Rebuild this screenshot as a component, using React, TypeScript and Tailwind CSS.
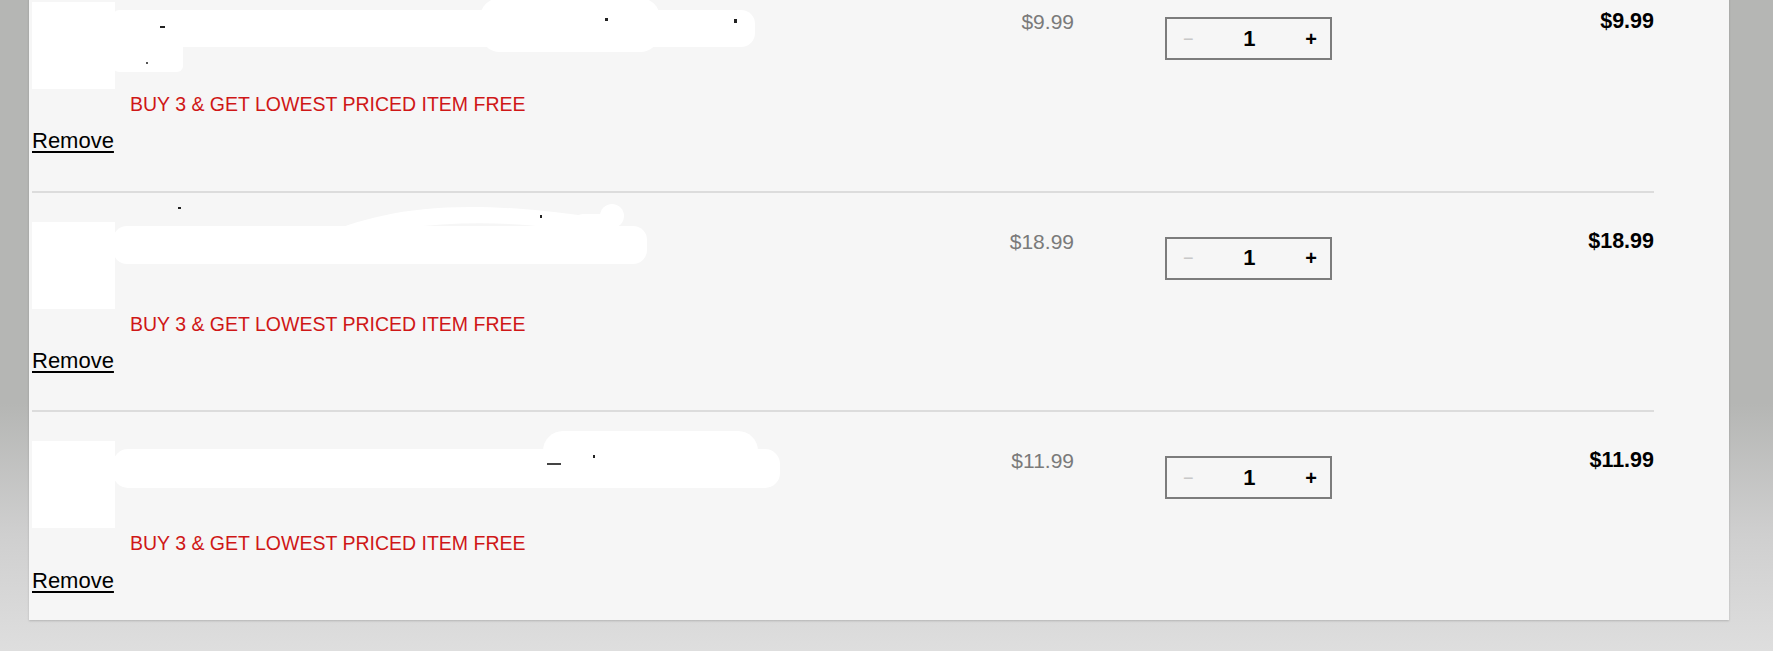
import React from "react";

interface CartItem {
  id: string;
  price: string;
  qty: number;
  blob: React.ReactNode;
}

const FONT = { fontFamily: '"Liberation Sans", Arial, sans-serif' };

// redacted product names (white scribbles over the original text)
const BLOBS: React.ReactNode[] = [
  <>
    <rect x="-2" y="8" width="642" height="37" rx="14" fill="#fff" />
    <rect x="-2" y="8" width="70" height="62" rx="6" fill="#fff" />
    <rect x="365" y="-4" width="180" height="54" rx="20" fill="#fff" />
    <rect x="45" y="24" width="5" height="2" fill="#222" />
    <rect x="490" y="16" width="3" height="3" fill="#222" />
    <rect x="619" y="17" width="3" height="4" fill="#222" />
    <rect x="31" y="60" width="2" height="2" fill="#555" />
  </>,
  <>
    <rect x="-2" y="4" width="534" height="38" rx="14" fill="#fff" />
    <path d="M205 14 C 260 -10, 330 -26, 470 -6 L 478 12 C 380 -6, 300 0, 215 20 Z" fill="#fff" />
    <circle cx="497" cy="-6" r="12" fill="#fff" />
    <rect x="460" y="-8" width="40" height="18" rx="8" fill="#fff" />
    <rect x="63" y="-15" width="3" height="2" fill="#222" />
    <rect x="425" y="-7" width="2" height="3" fill="#222" />
  </>,
  <>
    <rect x="-2" y="8" width="667" height="39" rx="15" fill="#fff" />
    <rect x="428" y="-10" width="215" height="45" rx="20" fill="#fff" />
    <rect x="462" y="28" width="113" height="19" rx="4" fill="#fff" />
    <rect x="478" y="14" width="2" height="3" fill="#222" />
    <rect x="432" y="22" width="14" height="2" fill="#444" />
  </>,
];

const ITEMS: CartItem[] = [
  { id: "a", price: "$9.99", qty: 1, blob: BLOBS[0] },
  { id: "b", price: "$18.99", qty: 1, blob: BLOBS[1] },
  { id: "c", price: "$11.99", qty: 1, blob: BLOBS[2] },
];

function QtyBox({ qty }: { qty: number }) {
  return (
    <div className="mt-[15px] ml-[91px] flex h-[43px] w-[167px] items-center justify-between border-2 border-[#7c7c7c] pl-[16px] pr-[13px]">
      <span className="text-[18px] leading-none text-[#c8c8c8]">−</span>
      <span className="text-[22px] font-bold leading-none text-black">{qty}</span>
      <span className="text-[20px] font-bold leading-none text-black">+</span>
    </div>
  );
}

function CartRow({ item, last }: { item: CartItem; last: boolean }) {
  return (
    <div className={last ? "pt-[29px] pb-[27px]" : "pt-[29px] pb-[37px] border-b-2 border-[#dcdcdc]"}>
      <div className="flex items-start">
        <div className="h-[87px] w-[83px] shrink-0 bg-white" />
        <div className="relative h-[87px] w-[839px] shrink-0">
          <svg className="absolute left-0 top-0 overflow-visible" width="700" height="80">
            {item.blob}
          </svg>
        </div>
        <div className="mt-[8px] w-[120px] shrink-0 text-right text-[21px] text-[#7a7a7a]">
          {item.price}
        </div>
        <QtyBox qty={item.qty} />
        <div className="mt-[7px] flex-1 text-right text-[21.5px] font-bold text-black">
          {item.price}
        </div>
      </div>
      <div className="mt-[4px] pl-[98px] text-[19.5px] text-[#cf1717]">
        BUY 3 &amp; GET LOWEST PRICED ITEM FREE
      </div>
      <div className="mt-[13px]">
        <a href="#" className="text-[22px] text-black underline decoration-[2px] underline-offset-[3px]">
          Remove
        </a>
      </div>
    </div>
  );
}

export default function App() {
  return (
    <div
      className="relative h-[651px] w-full overflow-hidden leading-[1.149] bg-[linear-gradient(to_bottom,#b5b6b4_0%,#b5b6b4_62%,#cfcfcf_82%,#dedede_100%)]"
      style={FONT}
    >
      <div className="ml-[29px] mt-[-27px] w-[1700px] bg-[#f6f6f6] pl-[3px] pr-[75px] shadow-[0_1px_2px_rgba(0,0,0,0.18)]">
        {ITEMS.map((item, i) => (
          <CartRow key={item.id} item={item} last={i === ITEMS.length - 1} />
        ))}
      </div>
    </div>
  );
}
